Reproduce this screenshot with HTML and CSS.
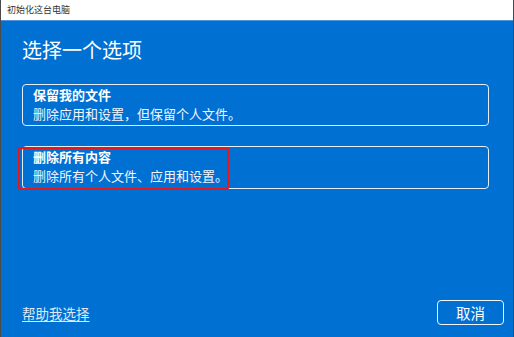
FILE: index.html
```html
<!DOCTYPE html>
<html lang="zh-CN">
<head>
    <meta charset="UTF-8">
    <meta name="viewport" content="width=device-width, initial-scale=1.0">
    <title>初始化这台电脑</title>
    <link rel="stylesheet" href="styles.css">
</head>
<body>
    <div class="window">
        <div class="titlebar">初始化这台电脑</div>

        <div class="content">
            <h1>选择一个选项</h1>

            <div class="option">
                <div class="option-title">保留我的文件</div>
                <div class="option-desc">删除应用和设置，但保留个人文件。</div>
            </div>

            <div class="option">
                <div class="option-title">删除所有内容</div>
                <div class="option-desc">删除所有个人文件、应用和设置。</div>
                <div class="highlight"></div>
            </div>
        </div>

        <div class="footer">
            <a class="help-link" href="#">帮助我选择</a>
            <button class="cancel">取消</button>
        </div>
    </div>
</body>
</html>
```

FILE: styles.css
```css
body {
    margin: 0;
    font-family: "Noto Sans CJK SC", "Noto Sans", sans-serif;
}
.window {
    width: 514px;
    height: 337px;
    box-sizing: border-box;
    display: flex;
    flex-direction: column;
    background-color: #0070d3;
    border-left: 1px solid #4a4a4a;
    border-right: 1px solid #3c4a5c;
    overflow: hidden;
}
.titlebar {
    height: 20px;
    line-height: 20px;
    padding-left: 6px;
    background: white;
    color: #333;
    font-size: 9px;
    border-bottom: 1px solid #4d94dc;
}
.content {
    padding: 0 24px 0 21px;
}
h1 {
    margin: 14px 0 19.5px;
    font-size: 20px;
    line-height: 29px;
    font-weight: normal;
    color: white;
}
.option {
    position: relative;
    height: 42px;
    box-sizing: border-box;
    margin-bottom: 20px;
    padding: 1.5px 10px 0;
    border: 1.5px solid #e6eefa;
    border-radius: 4px;
    color: white;
    font-size: 13px;
    line-height: 18.8px;
}
.option + .option {
    height: 43px;
    padding-top: 1.5px;
}
.option-title {
    font-weight: bold;
}
.option-desc {
    color: #f2f6fc;
}
.highlight {
    position: absolute;
    left: -5px;
    top: 0.5px;
    width: 211px;
    height: 43px;
    box-sizing: border-box;
    border: 2px solid #e8171c;
    border-radius: 2px;
}
.footer {
    margin-top: auto;
    display: flex;
    justify-content: space-between;
    align-items: center;
    padding: 0 9px 12px 21px;
}
.help-link {
    color: #dce9f8;
    font-size: 13.5px;
    line-height: 20px;
    text-decoration: underline;
    text-underline-offset: 2px;
}
.cancel {
    width: 67px;
    height: 25px;
    padding: 0;
    background: transparent;
    border: 1.5px solid #f2f6fc;
    border-radius: 4px;
    color: white;
    font-family: inherit;
    font-size: 14.5px;
    line-height: 20px;
}
```
